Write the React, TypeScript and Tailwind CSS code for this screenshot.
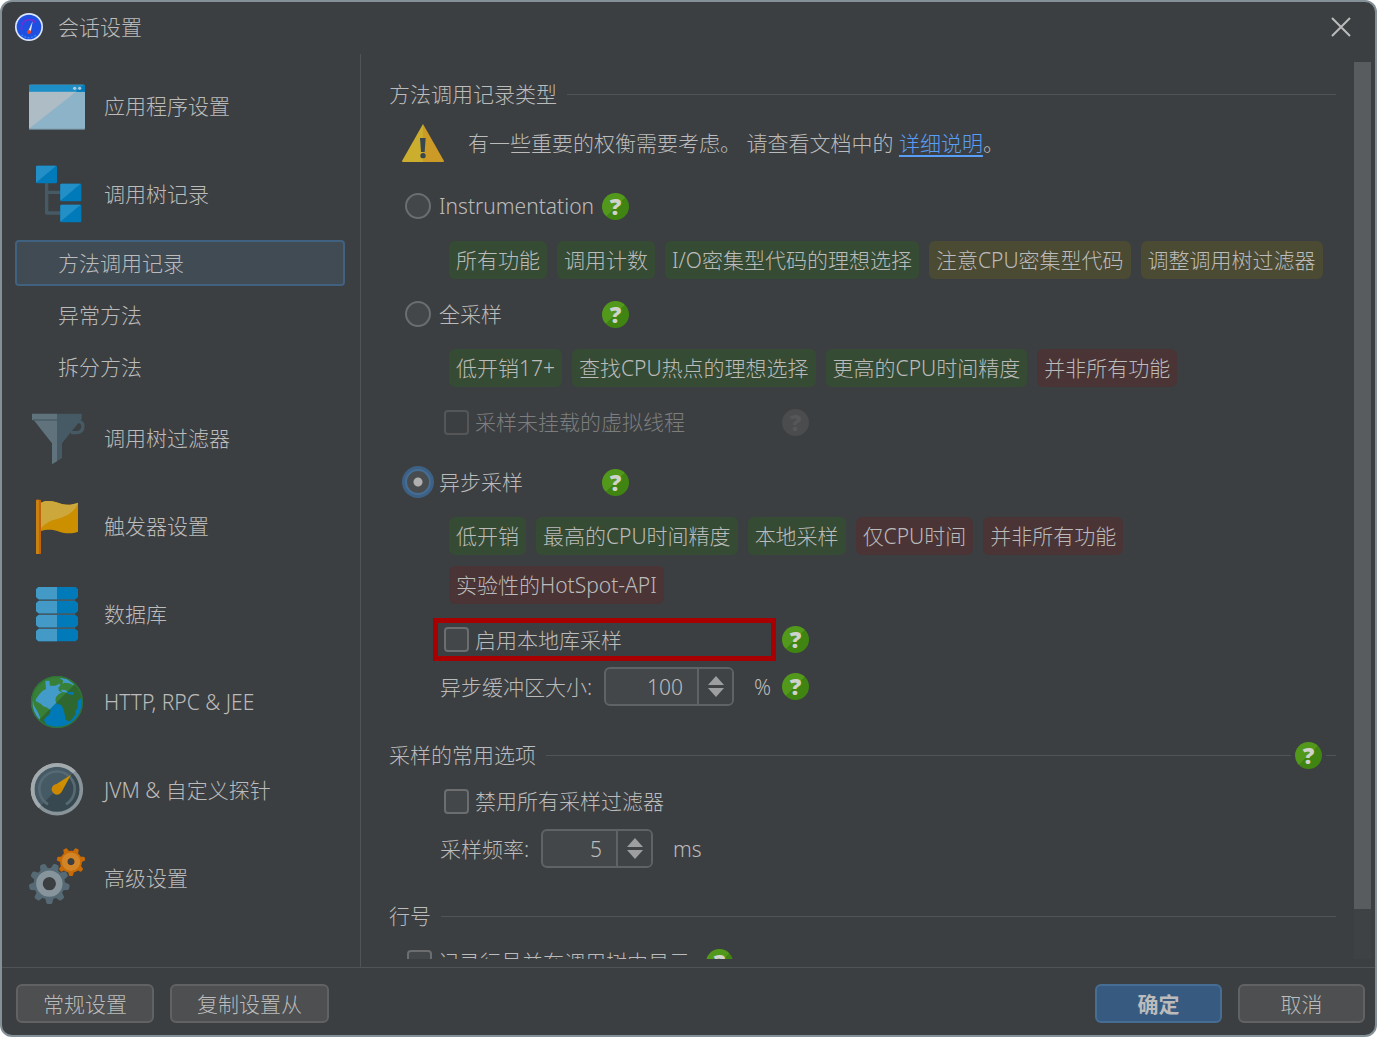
import React, { useState } from 'react';
import clsx from 'clsx';

type Tone = 'good' | 'warn' | 'bad';

const TONES: Record<Tone, string> = {
  good: 'bg-[#364b34]',
  warn: 'bg-[#4b4a33]',
  bad: 'bg-[#4a3435]',
};

const ICON = 'h-14 w-14 shrink-0 overflow-visible';

function WindowIcon() {
  return (
    <svg viewBox="0 0 168 168" className={ICON}>
      <rect y="20" width="168" height="134" rx="4" fill="#8cb3c8" />
      <path d="M0 41H141L0 152Z" fill="#adbcc5" />
      <path d="M0 41V24Q0 20 4 20H164Q168 20 168 24V41Z" fill="#1e8ec6" />
      <path d="M141 41L164 20Q168 20 168 24V41Z" fill="#007ab8" />
      <path d="M0 152H168V155H0Z" fill="#6f8794" />
      <circle cx="137" cy="31" r="5" fill="#adc8d8" />
      <circle cx="152" cy="31" r="5" fill="#adc8d8" />
    </svg>
  );
}

function TreeIcon() {
  const boxes = [[21, -1], [94, 53], [94, 116]];
  return (
    <svg viewBox="0 0 168 168" className={ICON}>
      <path d="M53 50V141H96M53 79H96" fill="none" stroke="#455a64" strokeWidth="10" strokeLinejoin="round" />
      {boxes.map(([x, y]) => (
        <g key={y} transform={`translate(${x} ${y})`}>
          <rect width="63" height="53" rx="4" fill="#007ab8" />
          <path d="M0 51V4Q0 0 4 0H61Z" fill="#228fc6" />
        </g>
      ))}
    </svg>
  );
}

function FilterIcon() {
  return (
    <svg viewBox="0 0 168 168" className={ICON}>
      <path d="M137 37Q160 29 162 48Q161 68 143 68H126" fill="none" stroke="#455a64" strokeWidth="10" />
      <path d="M84 11H158V27L99 100V144L84 154Z" fill="#455a64" />
      <path d="M9 11H84V154L69 163V100L14 30H9Z" fill="#60737d" />
      <path d="M12 28H84V32H12Z" fill="#455a64" />
    </svg>
  );
}

function FlagIcon() {
  return (
    <svg viewBox="0 0 168 168" className={ICON}>
      <path d="M36 14C58 3 82 13 98 18C118 24 138 17 147 14V101C128 109 103 107 85 99C66 93 50 95 36 99Z" fill="#cc8f00" />
      <path d="M36 14C58 3 82 13 98 18C118 24 138 17 147 14C139 42 112 55 84 63C62 68 46 79 36 90Z" fill="#cca83c" />
      <rect x="21" y="5" width="15" height="163" rx="2" fill="#c0630c" />
      <rect x="21" y="5" width="9" height="163" rx="2" fill="#c98112" />
    </svg>
  );
}

function DatabaseIcon() {
  return (
    <svg viewBox="0 0 168 168" className={ICON}>
      <path d="M30 36H138V134H30Z" fill="#455a64" />
      {[3, 45, 87, 129].map(y => (
        <g key={y} transform={`translate(21 ${y})`}>
          <path d="M7 0H119L126 7V30L119 37H7L0 30V7Z" fill="#007ab8" />
          <path d="M7 0H63V37H7L0 30V7Z" fill="#439ac7" />
        </g>
      ))}
    </svg>
  );
}

function GlobeLayer({ land, sea }: { land: string; sea: string }) {
  return (
    <>
      <circle cx="84" cy="84" r="78" fill={land} />
      <g fill={sea} transform="translate(-87 -579)">
        <path d="M136 600L148 599L150 614L166 614L178 608L182 612L175 620L177 630L186 634L176 640L168 648L166 658L170 668L184 672L190 684L194 700L197 716L205 721L214 718L222 706L227 700L227 690L233 680L234 660L241 652L245 656L243 686L228 715L205 731L185 738L160 739L140 733L132 718L136 710L149 700L152 688L142 680L130 676L122 668L107 660L108 654L118 640L127 630L138 624Z" />
        <path d="M178 590L200 594L220 608L222 614L208 607L194 605L187 608L190 599Z" />
        <path d="M183 626L196 627L205 634L222 633L221 641L207 640L196 634L186 633Z" />
        <path d="M98 658L103 676L114 694L121 712L117 718L104 700L97 678Z" />
      </g>
    </>
  );
}

function GlobeIcon() {
  return (
    <svg viewBox="0 0 168 168" className={ICON}>
      <defs>
        <clipPath id="globe-lit">
          <path d="M0 0H168L0 168Z" />
        </clipPath>
      </defs>
      <GlobeLayer land="#2e6830" sea="#0079b8" />
      <g clipPath="url(#globe-lit)">
        <GlobeLayer land="#388038" sea="#429bc8" />
      </g>
      <circle cx="84" cy="84" r="76" fill="none" stroke="#30733a" strokeWidth="4" />
    </svg>
  );
}

function GaugeIcon() {
  return (
    <svg viewBox="0 0 168 168" className={ICON}>
      <circle cx="84" cy="82" r="73" fill="#374850" />
      <path d="M32 134A73 73 0 0 1 136 30Z" fill="#455a64" />
      <path d="M57 127A53 53 0 1 1 111 127" fill="none" stroke="#566a74" strokeWidth="8" />
      <circle cx="84" cy="82" r="73" fill="none" stroke="#89949a" strokeWidth="11" />
      <path d="M32 134A73 73 0 0 1 136 30" fill="none" stroke="#a2aaae" strokeWidth="11" />
      <path d="M126 38L98 89L77 70Z" fill="#cc8f00" />
      <circle cx="84" cy="82" r="16" fill="#cc8800" />
    </svg>
  );
}

interface GearProps {
  cx: number;
  cy: number;
  teeth: number;
  size: number;
  hole: number;
  colors: [string, string];
}

function Gear({ cx, cy, teeth, size, hole, colors }: GearProps) {
  const body = size * 0.78;
  return (
    <g transform={`translate(${cx} ${cy})`}>
      <circle r={(body + hole) / 2} fill="none" stroke={colors[0]} strokeWidth={body - hole} />
      {Array.from({ length: teeth }, (_, i) => (
        <path
          key={i}
          transform={`rotate(${(i * 360) / teeth}) scale(${size / 60})`}
          d="M-13 40L-9 57Q-8 61-4 61H4Q8 61 9 57L13 40Z"
          fill={colors[0]}
        />
      ))}
      <circle r={(size * 0.66 + hole) / 2} fill="none" stroke={colors[1]} strokeWidth={size * 0.66 - hole} />
    </g>
  );
}

function GearsIcon() {
  return (
    <svg viewBox="0 0 168 168" className={ICON}>
      <Gear cx={61} cy={101} teeth={9} size={60} hole={20} colors={['#566a75', '#87949b']} />
      <Gear cx={126} cy={35} teeth={7} size={42} hole={11} colors={['#c86a06', '#d28527']} />
    </svg>
  );
}

function AppLogo() {
  return (
    <svg viewBox="0 0 84 84" className="h-7 w-7 shrink-0">
      <circle cx="42" cy="42" r="42" fill="#dbe6fb" />
      <circle cx="42" cy="42" r="37" fill="#1f4fe0" />
      <path d="M20 50A24 24 0 0 1 62 29" fill="none" stroke="#7a2bd0" strokeWidth="5" />
      <path d="M20 65A32 32 0 0 0 64 65" fill="none" stroke="#2b86ee" strokeWidth="4" strokeDasharray="6 4" />
      <path d="M53 25L47 58H38Z" fill="#e4ecff" />
      <circle cx="42" cy="57" r="6" fill="#e8402c" />
    </svg>
  );
}

function WarningIcon() {
  return (
    <svg viewBox="0 0 126 114" className="h-[38px] w-[42px] shrink-0">
      <path d="M63 0L126 111Q126 114 123 114H63Z" fill="#cc9a26" />
      <path d="M63 0V114H3Q0 114 0 111Z" fill="#ccae2e" />
      <path d="M54 42H71L68 84H57Z" fill="#37474f" />
      <circle cx="63" cy="95" r="8" fill="#37474f" />
    </svg>
  );
}

function HelpButton({ disabled }: { disabled?: boolean }) {
  return (
    <button
      type="button"
      aria-label="帮助"
      disabled={disabled}
      className={clsx(
        "flex h-[27px] w-[27px] shrink-0 items-center justify-center rounded-full font-['Open_Sans',sans-serif] text-[23px] leading-none font-extrabold",
        disabled
          ? 'bg-[#4a4c4e] text-[#555759]'
          : 'bg-linear-135 from-[#52981a] from-50% to-[#408512] to-50% text-[#cfd3cc]'
      )}
    >
      ?
    </button>
  );
}

function SectionTitle({ children, help }: { children: React.ReactNode; help?: boolean }) {
  return (
    <div className="flex h-8 items-center">
      <h2 className="shrink-0">{children}</h2>
      <div className="ml-2.5 h-px grow bg-[#515456]" />
      {help && (
        <>
          <div className="mx-1">
            <HelpButton />
          </div>
          <div className="h-px w-2.5 bg-[#515456]" />
        </>
      )}
    </div>
  );
}

interface RadioRowProps {
  label: string;
  checked: boolean;
  onSelect: () => void;
}

function RadioRow({ label, checked, onSelect }: RadioRowProps) {
  return (
    <div className="flex h-7 items-center pl-4">
      <label className="flex w-[197px] items-center gap-2">
        <input
          type="radio"
          name="recording-type"
          checked={checked}
          onChange={onSelect}
          className="h-[26px] w-[26px] shrink-0 appearance-none rounded-full border-2 border-[#6b6d6f] bg-[#43474a] checked:border-[#466d94] checked:bg-radial checked:from-[#b0b0b0] checked:from-[4px] checked:to-[#484c4f] checked:to-[5px] checked:ring-[3px] checked:ring-[#3d6185]"
        />
        {label}
      </label>
      <HelpButton />
    </div>
  );
}

function CheckRow({ label, disabled }: { label: string; disabled?: boolean }) {
  return (
    <label className={clsx('flex items-center gap-1.5', disabled && 'text-[#7c7e7f]')}>
      <input
        type="checkbox"
        disabled={disabled}
        className="h-[25px] w-[25px] shrink-0 appearance-none rounded border-2 border-[#6b6d6f] bg-[#43474a] checked:bg-[#375a81] disabled:border-[#545658] disabled:bg-transparent"
      />
      {label}
    </label>
  );
}

function Chips({ items }: { items: [string, Tone][] }) {
  return (
    <ul className="flex flex-wrap gap-x-2.5 gap-y-[11px] pl-[60px]">
      {items.map(([text, tone]) => (
        <li key={text} className={clsx('flex h-[38px] items-center rounded-md px-[7px] whitespace-nowrap', TONES[tone])}>
          {text}
        </li>
      ))}
    </ul>
  );
}

interface SpinnerProps {
  id: string;
  value: number;
  onChange: (value: number) => void;
  width: string;
}

function Spinner({ id, value, onChange, width }: SpinnerProps) {
  return (
    <div className="flex h-[39px] overflow-hidden rounded-md border-2 border-[#606365] bg-[#43474a]">
      <input
        id={id}
        type="text"
        inputMode="numeric"
        value={value}
        onChange={e => onChange(Number(e.target.value) || 0)}
        className={clsx('pr-3.5 text-right outline-none', width)}
      />
      <div className="flex w-[35px] flex-col items-center justify-center gap-[3px] border-l-2 border-[#606365] bg-[#3f4346]">
        <button type="button" aria-label="增加" onClick={() => onChange(value + 1)}>
          <svg viewBox="0 0 16 9" className="h-[9px] w-4" fill="#9c9ea0"><path d="M8 0L16 9H0Z" /></svg>
        </button>
        <button type="button" aria-label="减少" onClick={() => onChange(value - 1)}>
          <svg viewBox="0 0 16 9" className="h-[9px] w-4" fill="#9c9ea0"><path d="M8 9L16 0H0Z" /></svg>
        </button>
      </div>
    </div>
  );
}

function FooterButton({ children, primary, width }: { children: string; primary?: boolean; width: string }) {
  return (
    <button
      type="button"
      className={clsx(
        'h-[39px] rounded-md border-2',
        width,
        primary ? 'border-[#466d94] bg-[#375a81] font-bold' : 'border-[#606263] bg-[#4d4f51]'
      )}
    >
      {children}
    </button>
  );
}

interface NavItem {
  label: string;
  icon: () => React.ReactNode;
  children?: string[];
}

const NAV: NavItem[] = [
  { label: '应用程序设置', icon: WindowIcon },
  { label: '调用树记录', icon: TreeIcon, children: ['方法调用记录', '异常方法', '拆分方法'] },
  { label: '调用树过滤器', icon: FilterIcon },
  { label: '触发器设置', icon: FlagIcon },
  { label: '数据库', icon: DatabaseIcon },
  { label: 'HTTP, RPC & JEE', icon: GlobeIcon },
  { label: 'JVM & 自定义探针', icon: GaugeIcon },
  { label: '高级设置', icon: GearsIcon },
];

function Sidebar() {
  const [selected, setSelected] = useState('方法调用记录');

  return (
    <nav className="w-[359px] shrink-0 border-r border-[#515456] pt-2 pr-[15px] pl-[13px]">
      {NAV.map(({ label, icon: Icon, children }) => (
        <div key={label}>
          <button type="button" className="flex h-[88px] w-full items-center gap-[19px] pl-3.5 text-left">
            <Icon />
            {label}
          </button>
          {children?.map(child => (
            <div key={child} className="h-[52px] pt-0.5">
              <button
                type="button"
                onClick={() => setSelected(child)}
                className={clsx(
                  'h-[46px] w-full rounded border-2 pl-[41px] text-left',
                  child === selected ? 'border-[#40617f] bg-[#414b54]' : 'border-transparent'
                )}
              >
                {child}
              </button>
            </div>
          ))}
        </div>
      ))}
    </nav>
  );
}

export default function App() {
  const [mode, setMode] = useState('async');
  const [buffer, setBuffer] = useState(100);
  const [frequency, setFrequency] = useState(5);

  return (
    <div className="h-screen bg-white">
      <div className="flex h-full flex-col overflow-hidden rounded-xl border-2 border-[#849097] bg-[#3c3f41] font-['Noto_Sans','Noto_Sans_CJK_SC',sans-serif] text-[21px] leading-7 font-light text-[#bbbbbb]">
        <header className="mb-0.5 flex h-[50px] shrink-0 items-center justify-between pr-6 pl-[13px]">
          <div className="flex items-center gap-[15px]">
            <AppLogo />
            <h1>会话设置</h1>
          </div>
          <button type="button" aria-label="关闭">
            <svg viewBox="0 0 20 20" className="h-5 w-5" stroke="#bbbbbb" strokeWidth="2">
              <path d="M1 1L19 19M19 1L1 19" />
            </svg>
          </button>
        </header>

        <div className="flex min-h-0 grow">
          <Sidebar />

          <main className="mt-2 mr-1 mb-2 flex min-w-0 grow">
            <div className="min-w-0 grow overflow-hidden pt-4 pr-[18px] pl-7">
              <SectionTitle>方法调用记录类型</SectionTitle>
              <div className="mt-3 flex h-[42px] items-center gap-6 pl-[13px]">
                <WarningIcon />
                <p>
                  有一些重要的权衡需要考虑。 请查看文档中的{' '}
                  <a href="#tradeoffs" className="text-[#589df6] underline decoration-2 underline-offset-4">详细说明</a>。
                </p>
              </div>

              <div className="mt-7">
                <RadioRow label="Instrumentation" checked={mode === 'instr'} onSelect={() => setMode('instr')} />
              </div>
              <div className="mt-[21px]">
                <Chips
                  items={[
                    ['所有功能', 'good'],
                    ['调用计数', 'good'],
                    ['I/O密集型代码的理想选择', 'good'],
                    ['注意CPU密集型代码', 'warn'],
                    ['调整调用树过滤器', 'warn'],
                  ]}
                />
              </div>

              <div className="mt-[21px]">
                <RadioRow label="全采样" checked={mode === 'full'} onSelect={() => setMode('full')} />
              </div>
              <div className="mt-[21px]">
                <Chips
                  items={[
                    ['低开销17+', 'good'],
                    ['查找CPU热点的理想选择', 'good'],
                    ['更高的CPU时间精度', 'good'],
                    ['并非所有功能', 'bad'],
                  ]}
                />
              </div>
              <div className="mt-[21px] flex h-7 items-center pl-[55px]">
                <div className="w-[338px]">
                  <CheckRow label="采样未挂载的虚拟线程" disabled />
                </div>
                <HelpButton disabled />
              </div>

              <div className="mt-8">
                <RadioRow label="异步采样" checked={mode === 'async'} onSelect={() => setMode('async')} />
              </div>
              <div className="mt-[21px]">
                <Chips
                  items={[
                    ['低开销', 'good'],
                    ['最高的CPU时间精度', 'good'],
                    ['本地采样', 'good'],
                    ['仅CPU时间', 'bad'],
                    ['并非所有功能', 'bad'],
                    ['实验性的HotSpot-API', 'bad'],
                  ]}
                />
              </div>
              <div className="mt-3.5 flex items-center gap-1.5 pl-11">
                <div className="flex h-[43px] w-[343px] items-center border-[5px] border-[#a80000] pl-1.5">
                  <CheckRow label="启用本地库采样" />
                </div>
                <HelpButton />
              </div>
              <div className="mt-1.5 flex items-center pl-[51px]">
                <label htmlFor="buffer" className="w-[164px]">异步缓冲区大小:</label>
                <Spinner id="buffer" value={buffer} onChange={setBuffer} width="w-[91px]" />
                <span className="ml-5 w-7">%</span>
                <HelpButton />
              </div>

              <div className="mt-[33px]">
                <SectionTitle help>采样的常用选项</SectionTitle>
              </div>
              <div className="mt-4 flex h-7 items-center pl-[55px]">
                <CheckRow label="禁用所有采样过滤器" />
              </div>
              <div className="mt-3.5 flex items-center pl-[51px]">
                <label htmlFor="frequency" className="w-[101px]">采样频率:</label>
                <Spinner id="frequency" value={frequency} onChange={setFrequency} width="w-[73px]" />
                <span className="ml-5">ms</span>
              </div>

              <div className="mt-8">
                <SectionTitle>行号</SectionTitle>
              </div>
              <div className="mt-4 flex h-7 items-center gap-4 pl-[18px]">
                <CheckRow label="记录行号并在调用树中显示" />
                <HelpButton />
              </div>
            </div>

            <div className="w-[17px] shrink-0 bg-[#3f4244]">
              <div className="h-[94.4%] bg-[#585c5f]" />
            </div>
          </main>
        </div>

        <footer className="flex shrink-0 items-center justify-between border-t border-[#515456] pt-4 pr-2.5 pb-3 pl-3.5">
          <div className="flex gap-4">
            <FooterButton width="w-[138px]">常规设置</FooterButton>
            <FooterButton width="w-[159px]">复制设置从</FooterButton>
          </div>
          <div className="flex gap-4">
            <FooterButton width="w-[127px]" primary>确定</FooterButton>
            <FooterButton width="w-[127px]">取消</FooterButton>
          </div>
        </footer>
      </div>
    </div>
  );
}
